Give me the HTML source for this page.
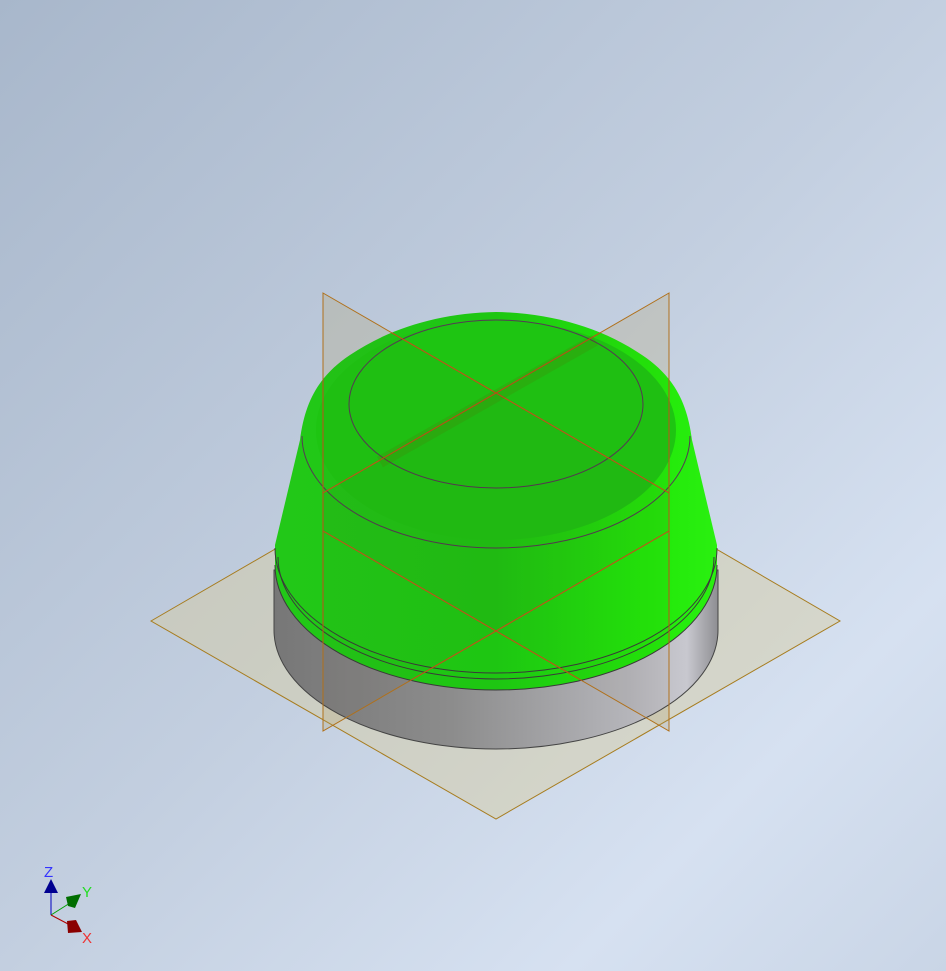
<!DOCTYPE html>
<html><head><meta charset="utf-8"><style>
html,body{margin:0;padding:0;width:946px;height:971px;overflow:hidden}
svg{display:block}
</style></head><body>
<svg width="946" height="971" viewBox="0 0 946 971" xmlns="http://www.w3.org/2000/svg">
<defs>
<linearGradient id="bg" x1="0" y1="0" x2="1" y2="1">
<stop offset="0" stop-color="#a8b7cb"/><stop offset="0.5" stop-color="#c3cfe0"/><stop offset="0.8" stop-color="#d6e1f1"/><stop offset="1" stop-color="#c9d5e6"/>
</linearGradient>
<linearGradient id="gray" x1="0" y1="0" x2="1" y2="0">
<stop offset="0" stop-color="#777"/><stop offset="0.4" stop-color="#8c8c8c"/><stop offset="0.8" stop-color="#b5b5ba"/><stop offset="0.93" stop-color="#c8c8cf"/><stop offset="1" stop-color="#8e8e92"/>
</linearGradient>
<linearGradient id="grn" x1="0" y1="0" x2="1" y2="0">
<stop offset="0" stop-color="#22c818"/><stop offset="0.5" stop-color="#1ec612"/><stop offset="0.85" stop-color="#22e80a"/><stop offset="1" stop-color="#2af010"/>
</linearGradient>
<clipPath id="gc"><path d="M275,545 L300,440 C305,400 320,375 350,355 C390,328 440,313 496,312 C552,313 602,328 642,355 C672,375 687,400 692,440 L717,545 L717,565 A221,125 0 0 1 275,565 Z"/></clipPath>
</defs>
<rect width="946" height="971" fill="url(#bg)"/>
<polygon points="151,621 496,421 840,621 496,819" fill="rgba(215,205,160,0.45)" stroke="#a77c1e" stroke-width="1"/>
<polygon points="323,293 669,493 669,731 323,531" fill="rgba(200,180,120,0.22)"/>
<polygon points="669,293 323,493 323,731 669,531" fill="rgba(200,180,120,0.22)"/>
<path d="M274,570 L274,630 A222,119 0 0 0 718,630 L718,570 Z" fill="url(#gray)" stroke="#444" stroke-width="1"/>
<path d="M275,545 L300,440 C305,400 320,375 350,355 C390,328 440,313 496,312 C552,313 602,328 642,355 C672,375 687,400 692,440 L717,545 L717,565 A221,125 0 0 1 275,565 Z" fill="url(#grn)"/>
<g clip-path="url(#gc)">
<ellipse cx="496" cy="430" rx="180" ry="110" fill="#1ec512"/>
</g>
<path d="M275,548 A221,125 0 0 0 717,548" fill="none" stroke="#3a3a3a" stroke-width="1"/>
<path d="M278,557 A218,122 0 0 0 714,557" fill="none" stroke="#3a3a3a" stroke-width="1"/>
<path d="M275,565 A221,125 0 0 0 717,565" fill="none" stroke="#3a3a3a" stroke-width="1"/>
<path d="M302,436 A194,112 0 0 0 690,436" fill="none" stroke="#553a55" stroke-width="1"/>
<ellipse cx="496" cy="404" rx="147" ry="84" fill="none" stroke="#553a55" stroke-width="1"/>
<polygon points="323,293 669,493 669,731 323,531" fill="rgba(80,60,20,0.04)" stroke="#b0701a" stroke-width="1"/>
<polygon points="669,293 323,493 323,731 669,531" fill="rgba(80,60,20,0.04)" stroke="#b0701a" stroke-width="1"/>
<g clip-path="url(#gc)" stroke="#c0501a" stroke-width="1" fill="none">
<polygon points="323,293 669,493 669,731 323,531"/>
<polygon points="669,293 323,493 323,731 669,531"/>
</g>
<path d="M595,340 L380,462" stroke="rgba(100,90,0,0.15)" stroke-width="12" fill="none"/>
<line x1="51" y1="893" x2="51" y2="915" stroke="#0000c0" stroke-width="1"/>
<line x1="51" y1="915" x2="70" y2="903" stroke="#00a000" stroke-width="1"/>
<line x1="51" y1="915" x2="70" y2="925" stroke="#b00000" stroke-width="1"/>
<polygon points="51,879 58,893 44,893" fill="#000090"/>
<polygon points="66,897 81,894 75,908 68,906" fill="#006e00"/>
<polygon points="67,921 76,920 82,932 68,933" fill="#8a0000"/>
<text x="44" y="877" font-family="Liberation Sans, sans-serif" font-size="15" fill="#3333ff">Z</text>
<text x="82" y="897" font-family="Liberation Sans, sans-serif" font-size="15" fill="#22dd22">Y</text>
<text x="82" y="943" font-family="Liberation Sans, sans-serif" font-size="15" fill="#ee3333">X</text>
</svg>
</body></html>
